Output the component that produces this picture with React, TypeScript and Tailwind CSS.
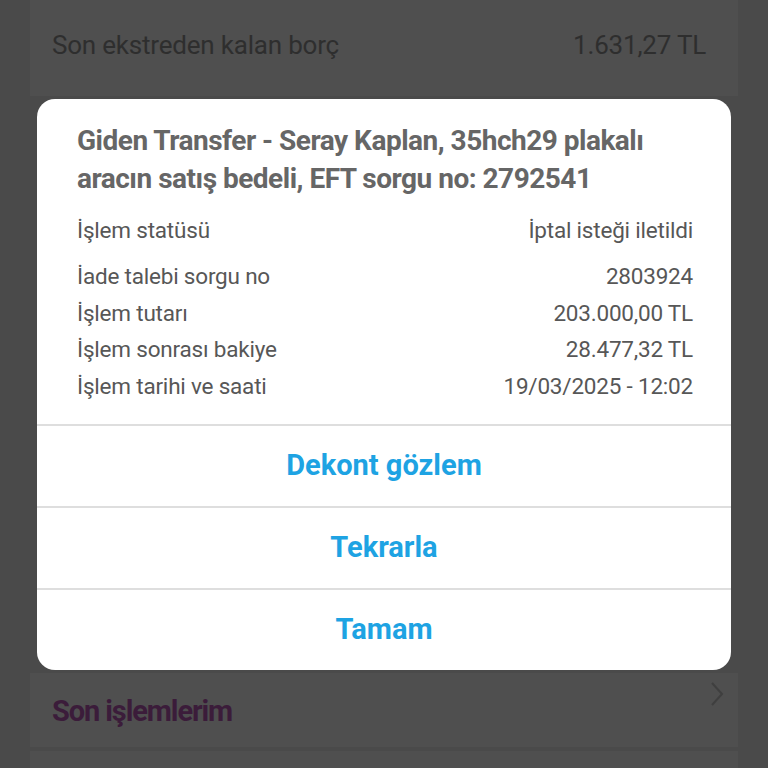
export default function App() {
  const rows = [
    { label: "İade talebi sorgu no", value: "2803924" },
    { label: "İşlem tutarı", value: "203.000,00 TL" },
    { label: "İşlem sonrası bakiye", value: "28.477,32 TL" },
    { label: "İşlem tarihi ve saati", value: "19/03/2025 - 12:02" },
  ];

  return (
    <div
      className="w-[768px] h-[768px] overflow-hidden bg-[#4a4a4a] flex flex-col px-[30px]"
      style={{ fontFamily: 'Roboto, "Noto Sans", sans-serif' }}
    >
      {/* background card top */}
      <div className="bg-[#4f4f4f] h-[96px] shrink-0 flex items-start justify-between pl-[22px] pr-[32px] pt-[26px] text-[26px] text-[#2e2e2e] tracking-[-0.2px]">
        <span>Son ekstreden kalan borç</span>
        <span>1.631,27 TL</span>
      </div>

      {/* dialog */}
      <div className="mx-[7px] mt-[3px] bg-white rounded-[18px] shrink-0 flex flex-col overflow-hidden">
        <div className="pl-[40px] pr-[38px] pt-[23px] pb-[20px]">
          <h2 className="text-[28px] leading-[38px] font-bold text-[#666] tracking-[-0.5px] whitespace-nowrap">
            Giden Transfer - Seray Kaplan, 35hch29 plakalı
            <br />
            aracın satış bedeli, EFT sorgu no: 2792541
          </h2>
          <div className="mt-[14px] flex justify-between text-[22.5px] leading-[36px] text-[#575757] tracking-[-0.2px]">
            <span>İşlem statüsü</span>
            <span>İptal isteği iletildi</span>
          </div>
          <div className="mt-[10px] flex flex-col text-[22.5px] leading-[36.5px] text-[#575757] tracking-[-0.2px]">
            {rows.map((r) => (
              <div key={r.label} className="flex justify-between">
                <span>{r.label}</span>
                <span>{r.value}</span>
              </div>
            ))}
          </div>
        </div>
        {["Dekont gözlem", "Tekrarla", "Tamam"].map((b) => (
          <div
            key={b}
            className="h-[82px] border-t-2 border-[#dedede] flex items-center justify-center text-[29px] font-bold text-[#1ea3e3]"
          >
            {b}
          </div>
        ))}
      </div>

      {/* background card bottom */}
      <div className="mt-[3px] bg-[#4f4f4f] h-[74px] shrink-0 flex items-center justify-between px-[22px] relative">
        <span className="text-[29px] font-bold text-[#3b1c3a] tracking-[-1.1px] mt-[4px]">Son işlemlerim</span>
        <svg width="14" height="26" viewBox="0 0 14 26" className="absolute right-[14px] top-[8px]">
          <path d="M2 2 L12 13 L2 24" fill="none" stroke="#3f3f3f" strokeWidth="2" />
        </svg>
      </div>
      <div className="mt-[4px] bg-[#4f4f4f] flex-1" />
    </div>
  );
}
